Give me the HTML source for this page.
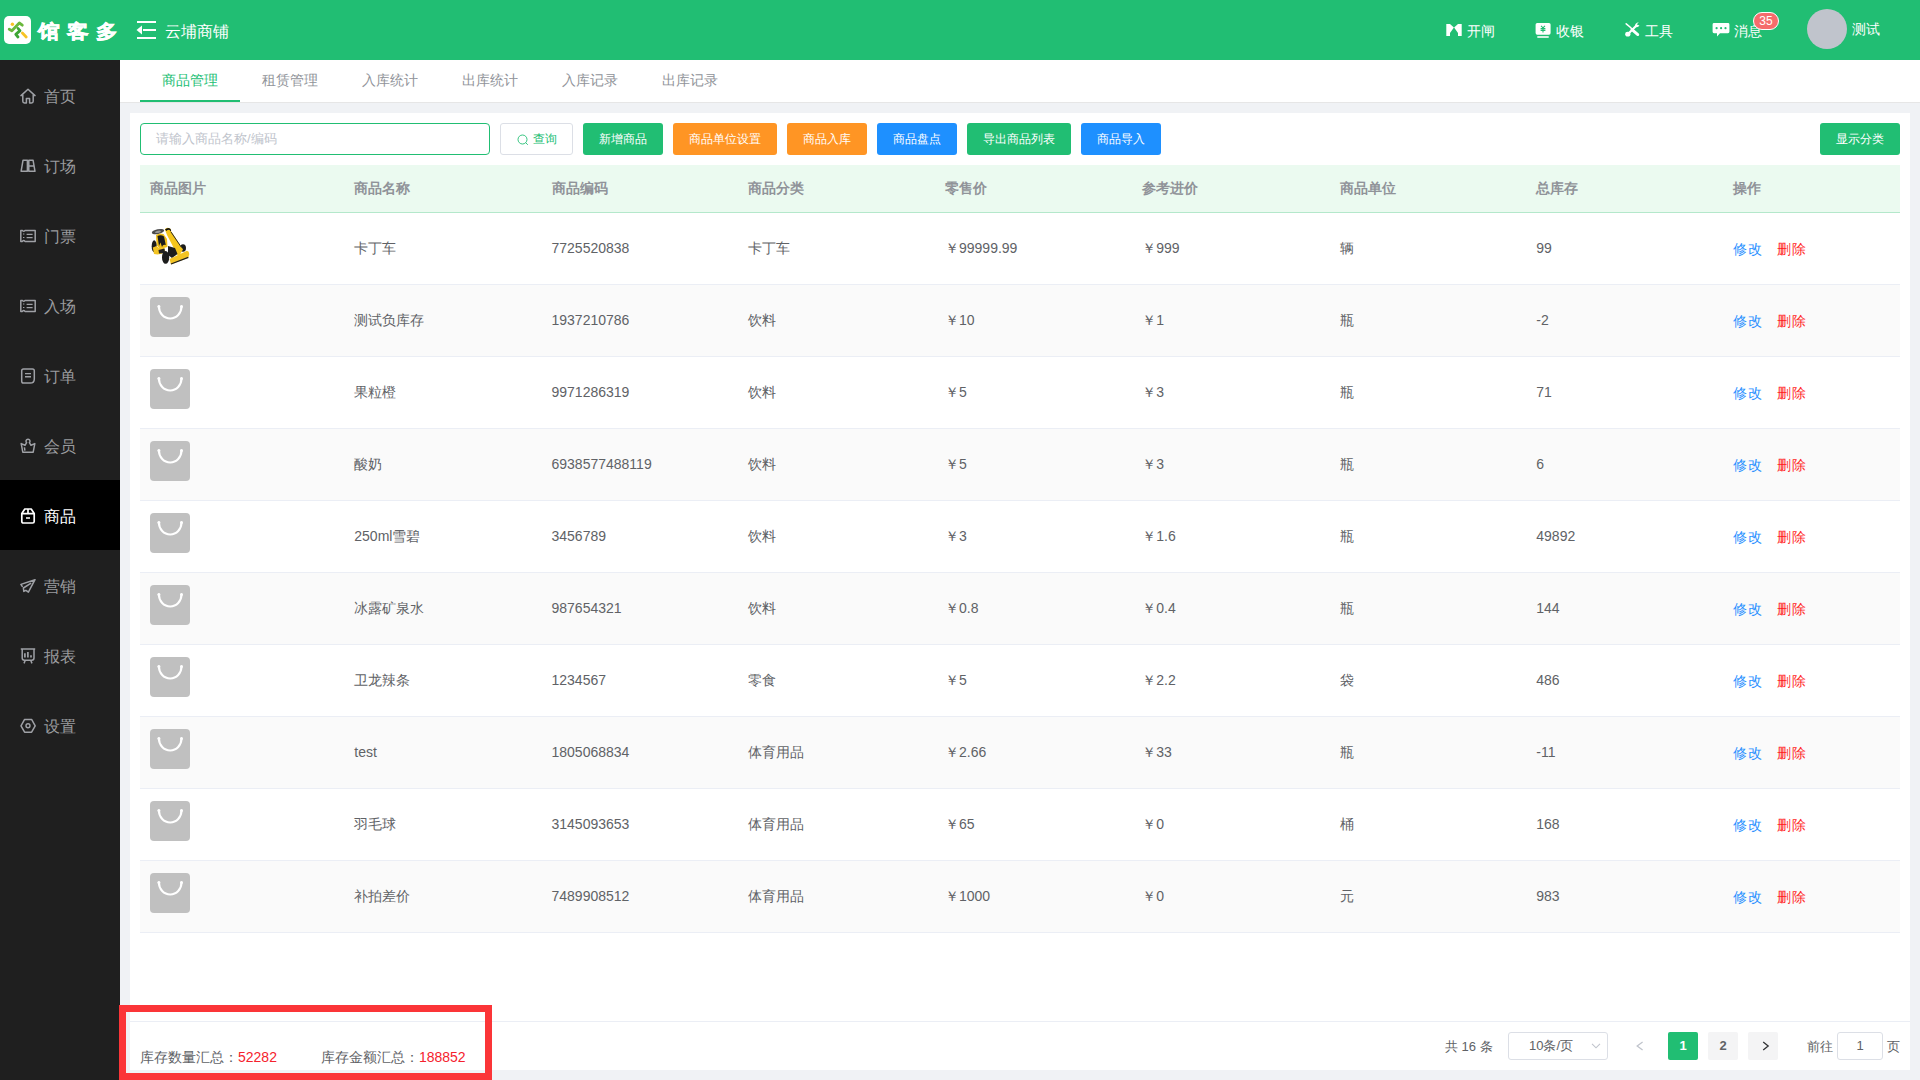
<!DOCTYPE html>
<html><head><meta charset="utf-8"><style>
*{margin:0;padding:0;box-sizing:border-box}
html,body{width:1920px;height:1080px;overflow:hidden;background:#f0f2f5;font-family:"Liberation Sans",sans-serif;font-size:14px;color:#606266}
.abs{position:absolute}
#hd{position:absolute;left:0;top:0;width:1920px;height:60px;background:#21be73}
#logo{position:absolute;left:4px;top:16px;width:27px;height:28px;background:#fff;border-radius:5px}
#brand{position:absolute;left:38px;top:17.5px;height:28px;line-height:28px;font-size:19px;font-weight:bold;color:#fff;letter-spacing:6.5px;-webkit-text-stroke:0.6px #fff;white-space:nowrap;transform:scaleX(1.14);transform-origin:0 50%}
#ham{position:absolute;left:136px;top:21px}
#shop{position:absolute;left:165px;top:21px;font-size:16px;line-height:22px;color:#fff;white-space:nowrap}
.hi{position:absolute;top:21px;height:20px;line-height:20px;font-size:14px;color:#fff;white-space:nowrap}
.hi svg{position:absolute;top:1px}
#badge{position:absolute;left:1753px;top:12px;width:26px;height:18px;border-radius:9px;background:#f56c6c;border:1px solid #fff;color:#fff;font-size:12px;line-height:17px;text-align:center}
#avatar{position:absolute;left:1807px;top:9px;width:40px;height:40px;border-radius:50%;background:#c0c4cc}
#uname{position:absolute;left:1852px;top:19px;font-size:14px;line-height:20px;color:#fff}
#sb{position:absolute;left:0;top:60px;width:120px;height:1020px;background:#1f1f1f}
.mi{position:absolute;left:0;width:120px;height:70px}
.mi.act{background:#000}
.mic{position:absolute;left:20px;top:28px}
.mt{position:absolute;left:44px;top:25.5px;font-size:16px;line-height:22px;color:#9a9b9e;white-space:nowrap}
.act .mt{color:#fff}
#tabs{position:absolute;left:120px;top:60px;width:1800px;height:43px;background:#fff;border-bottom:1px solid #e6e6e6}
.tab{position:absolute;top:0;width:100px;height:42px;line-height:40px;text-align:center;font-size:14px;color:#909399}
.tab.on{color:#21be73}
.tab.on:after{content:"";position:absolute;left:0;right:0;bottom:0;height:2px;background:#21be73}
#card{position:absolute;left:130px;top:113px;width:1780px;height:957px;background:#fff}
#search{position:absolute;left:10px;top:10px;width:350px;height:32px;border:1px solid #21be73;border-radius:4px;font-size:13px;line-height:30px;padding-left:15px;color:#c0c4cc;white-space:nowrap}
.btn{position:absolute;top:10px;height:32px;border-radius:3px;color:#fff;font-size:12px;line-height:32px;text-align:center;white-space:nowrap}
.g{background:#21be73}.o{background:#ff9524}.b{background:#1e90ff}
#qbtn{position:absolute;left:370px;top:10px;width:73px;height:32px;border:1px solid #dcdfe6;border-radius:3px;color:#21be73;font-size:12px;line-height:30px;white-space:nowrap}
#tbl{position:absolute;left:10px;top:52px;width:1760px;height:768px}
#thead{position:absolute;left:0;top:0;width:1760px;height:48px;background:#ebfaf0;border-bottom:1px solid #b4e8cb}
.th{position:absolute;top:13px;font-size:14px;line-height:20px;font-weight:bold;color:#909399;white-space:nowrap}
.tr{position:absolute;left:0;width:1760px;height:72px;border-bottom:1px solid #ebeef5}
.td{position:absolute;top:25px;font-size:14px;line-height:20px;color:#606266;white-space:nowrap}
.img{position:absolute;top:12px;width:40px;height:40px}
.bl{color:#2990ff;letter-spacing:1px}.rd{color:#ff1f1f;margin-left:14px;letter-spacing:1px}
.op{top:26px}
#foot{position:absolute;left:0;top:908px;width:1780px;height:1px;background:#ebeef5}
#sum{position:absolute;left:10px;top:934px;font-size:14px;line-height:20px;color:#606266;white-space:nowrap}
#sum .v{color:#f5222d}
#redbox{position:absolute;left:119px;top:1005px;width:373px;height:75px;border:7px solid #fb3538}
.pg{position:absolute;font-size:13px;color:#606266;white-space:nowrap}

</style></head><body>
<div id="hd">
  <div id="logo"><svg width="27" height="28" viewBox="0 0 27 28">
    <circle cx="8.4" cy="8.2" r="1.7" fill="#f7c325"/>
    <path d="M5.2 13.2 L7.9 14.8 L15.3 7 L18.3 9.2" fill="none" stroke="#6ab83d" stroke-width="2.8" stroke-linecap="round" stroke-linejoin="round"/>
    <path d="M14 12.4 L16 14.6 L11.8 18.4 L14 21" fill="none" stroke="#3ea535" stroke-width="2.8" stroke-linecap="round" stroke-linejoin="round"/>
    <path d="M18.4 17 L22.2 20.9" fill="none" stroke="#f7c325" stroke-width="2.8" stroke-linecap="round"/>
  </svg></div>
  <div id="brand">馆客多</div>
  <svg id="ham" width="21" height="18" viewBox="0 0 21 18"><path d="M1 1 H20 M7 9 H20 M1 17 H20" stroke="#fff" stroke-width="2"/><path d="M0.5 9 L6 4.5 V13.5 Z" fill="#fff"/></svg>
  <div id="shop">云埔商铺</div>

  <div class="hi" style="left:1446px"><svg style="top:3px" width="16" height="12" viewBox="0 0 16 12"><path d="M0.3 0 H4 L7.9 3.6 L4 9.1 V12 H0.3 Z M15.7 0 H12 L8.1 3.6 L12 9.1 V12 H15.7 Z" fill="#fff"/></svg><span style="margin-left:21px">开闸</span></div>
  <div class="hi" style="left:1535px"><svg width="16" height="16" viewBox="0 0 16 16"><rect x="0.6" y="1.1" width="15" height="11.6" rx="1.6" fill="#fff"/><rect x="2.3" y="14.2" width="11.4" height="1.6" fill="#fff"/><path d="M6 3.8 L8 5.8 L10 3.8 M5.6 6.6 H10.4 M5.6 8.4 H10.4 M8 5.8 V10.6" stroke="#21be73" stroke-width="1.1" fill="none"/></svg><span style="margin-left:21px">收银</span></div>
  <div class="hi" style="left:1625px"><svg style="top:1px" width="15" height="15" viewBox="0 0 15 15"><path d="M1.2 1.8 L5 5 L12.8 12.6" stroke="#fff" stroke-width="1.6" stroke-linecap="round" fill="none"/><path d="M7 7.6 L12.8 12.6" stroke="#fff" stroke-width="2.8" stroke-linecap="round"/><path d="M11.5 3.5 L3 12" stroke="#fff" stroke-width="2.2" stroke-linecap="round"/><ellipse cx="2.8" cy="12.2" rx="2.6" ry="2.4" fill="#fff"/><path d="M10 4.8 Q9.6 1.2 13.8 0.3 L11.6 2.6 L14.5 3.6 Q12.8 6 10 4.8 Z" fill="#fff"/></svg><span style="margin-left:20px">工具</span></div>
  <div class="hi" style="left:1712px"><svg width="18" height="16" viewBox="0 0 18 16"><path d="M2 1 H16 Q17.4 1 17.4 2.4 V9.8 Q17.4 11.2 16 11.2 H8 L5 14.4 V11.2 H2 Q0.6 11.2 0.6 9.8 V2.4 Q0.6 1 2 1 Z" fill="#fff"/><circle cx="4.6" cy="6.2" r="1.1" fill="#21be73"/><circle cx="9.1" cy="6.2" r="1.1" fill="#21be73"/><circle cx="13.5" cy="6.2" r="1.1" fill="#21be73"/></svg><span style="margin-left:22px">消息</span></div>
  <div id="badge">35</div>
  <div id="avatar"></div>
  <div id="uname">测试</div>
</div>

<div id="sb">
</div>
<div class="mi" style="top:60px"><svg class="mic" width="16" height="16" viewBox="0 0 16 16"><path d="M1 7.6 L8 1.2 L15 7.6" fill="none" stroke="#9fa1a6" stroke-width="1.5" stroke-linejoin="round" stroke-linecap="round"/><path d="M2.8 6.4 V13.3 Q2.8 15 4.5 15 H6.4 V10.6 H9.6 V15 H11.5 Q13.2 15 13.2 13.3 V6.4" fill="none" stroke="#9fa1a6" stroke-width="1.5" stroke-linejoin="round"/></svg><span class="mt">首页</span></div>
<div class="mi" style="top:130px"><svg class="mic" width="16" height="16" viewBox="0 0 16 16"><path d="M3 2.3 H7.4 V13.3 H1.1 Z M8.8 2.3 H13.1 L15 13.3 H8.8 Z M8.8 8 H14" fill="none" stroke="#9fa1a6" stroke-width="1.5" stroke-linejoin="round"/></svg><span class="mt">订场</span></div>
<div class="mi" style="top:200px"><svg class="mic" width="16" height="16" viewBox="0 0 16 16"><path d="M0.8 2.4 H2.4 Q3.7 4.2 5 2.4 H15.2 V13.4 H5 Q3.7 11.6 2.4 13.4 H0.8 Z" fill="none" stroke="#9fa1a6" stroke-width="1.5" stroke-linejoin="round"/><path d="M3.7 5.6 V6.6 M3.7 9 V10 M6.6 6.4 H12.6 M6.6 9.6 H12.6" fill="none" stroke="#9fa1a6" stroke-width="1.4"/></svg><span class="mt">门票</span></div>
<div class="mi" style="top:270px"><svg class="mic" width="16" height="16" viewBox="0 0 16 16"><path d="M0.8 2.4 H2.4 Q3.7 4.2 5 2.4 H15.2 V13.4 H5 Q3.7 11.6 2.4 13.4 H0.8 Z" fill="none" stroke="#9fa1a6" stroke-width="1.5" stroke-linejoin="round"/><path d="M3.7 5.6 V6.6 M3.7 9 V10 M6.6 6.4 H12.6 M6.6 9.6 H12.6" fill="none" stroke="#9fa1a6" stroke-width="1.4"/></svg><span class="mt">入场</span></div>
<div class="mi" style="top:340px"><svg class="mic" width="16" height="16" viewBox="0 0 16 16"><path d="M3.5 0.9 H12.5 Q14.3 0.9 14.3 2.7 V11 Q14.3 15.1 10.2 15.1 H3.5 Q1.7 15.1 1.7 13.3 V2.7 Q1.7 0.9 3.5 0.9 Z" fill="none" stroke="#9fa1a6" stroke-width="1.5" stroke-linejoin="round"/><path d="M5 5.6 H11 M5 8.7 H11" fill="none" stroke="#9fa1a6" stroke-width="1.4"/></svg><span class="mt">订单</span></div>
<div class="mi" style="top:410px"><svg class="mic" width="16" height="16" viewBox="0 0 16 16"><path d="M1.2 5.6 L5 7.3 L6.6 4.6 A2 2 0 1 1 9.4 4.6 L11 7.3 L14.8 5.6 L13.2 14.2 H2.8 Z M4.4 9.4 L4.9 12.6" fill="none" stroke="#9fa1a6" stroke-width="1.5" stroke-linejoin="round"/></svg><span class="mt">会员</span></div>
<div class="mi act" style="top:480px"><svg class="mic" width="16" height="16" viewBox="0 0 16 16"><path d="M4.8 1 H11.2 L14.2 5.4 V13.4 Q14.2 15 12.6 15 H3.4 Q1.8 15 1.8 13.4 V5.4 Z M1.8 5.6 H14.2 M8 1 V5.6 M6 10 H10" fill="none" stroke="#ffffff" stroke-width="1.7" stroke-linejoin="round"/></svg><span class="mt">商品</span></div>
<div class="mi" style="top:550px"><svg class="mic" width="16" height="16" viewBox="0 0 16 16"><path d="M15 1.7 L0.9 6.4 L2.2 8.4 M15 1.7 L8.4 14.2 L5.9 12.3 L3.8 13.4 L3.4 10 L10.7 5.3" fill="none" stroke="#9fa1a6" stroke-width="1.5" stroke-linejoin="round" stroke-linecap="round"/></svg><span class="mt">营销</span></div>
<div class="mi" style="top:620px"><svg class="mic" width="16" height="16" viewBox="0 0 16 16"><path d="M0.8 1 H15.2 M2.2 1 V10 Q2.2 12.2 4.4 12.2 H11.8 Q14 12.2 14 10 V1 M5.2 12.5 L4 15.4 M10.8 12.5 L12 15.4" fill="none" stroke="#9fa1a6" stroke-width="1.5" stroke-linejoin="round"/><path d="M4.9 5.2 V9.6 M7.9 3.9 V9.6 M11 7.2 V9.6" fill="none" stroke="#9fa1a6" stroke-width="1.7"/></svg><span class="mt">报表</span></div>
<div class="mi" style="top:690px"><svg class="mic" width="16" height="16" viewBox="0 0 16 16"><path d="M4.6 1.4 H11.6 L15.2 7.8 L11.6 14.2 H4.6 L1 7.8 Z" fill="none" stroke="#9fa1a6" stroke-width="1.5" stroke-linejoin="round"/><circle cx="8" cy="7.8" r="2" fill="none" stroke="#9fa1a6" stroke-width="1.4"/></svg><span class="mt">设置</span></div>

<div id="tabs">
  <div class="tab on" style="left:20px">商品管理</div>
  <div class="tab" style="left:120px">租赁管理</div>
  <div class="tab" style="left:220px">入库统计</div>
  <div class="tab" style="left:320px">出库统计</div>
  <div class="tab" style="left:420px">入库记录</div>
  <div class="tab" style="left:520px">出库记录</div>
</div>

<div id="card">
  <div id="search">请输入商品名称/编码</div>
  <div id="qbtn"><svg style="position:absolute;left:16px;top:9.5px" width="12" height="12" viewBox="0 0 12 12"><circle cx="5.5" cy="5.5" r="4.5" fill="none" stroke="#21be73" stroke-width="0.9"/><path d="M8.7 8.7 L10.8 10.8" stroke="#21be73" stroke-width="0.9"/></svg><span style="position:absolute;left:32px;top:0">查询</span></div>
  <div class="btn g" style="left:453px;width:80px">新增商品</div>
  <div class="btn o" style="left:543px;width:104px">商品单位设置</div>
  <div class="btn o" style="left:657px;width:80px">商品入库</div>
  <div class="btn b" style="left:747px;width:80px">商品盘点</div>
  <div class="btn g" style="left:837px;width:104px">导出商品列表</div>
  <div class="btn b" style="left:951px;width:80px">商品导入</div>
  <div class="btn g" style="left:1690px;width:80px">显示分类</div>

  <div id="tbl">
    <div id="thead"><div class="th" style="left:10px">商品图片</div><div class="th" style="left:214.3px">商品名称</div><div class="th" style="left:411.5px">商品编码</div><div class="th" style="left:608.3px">商品分类</div><div class="th" style="left:805px">零售价</div><div class="th" style="left:1002.3px">参考进价</div><div class="th" style="left:1199.6px">商品单位</div><div class="th" style="left:1396.3px">总库存</div><div class="th" style="left:1593px">操作</div></div>
  </div>
  <div id="foot"></div>
  <div id="sum">库存数量汇总：<span class="v">52282</span><span style="display:inline-block;width:44px"></span>库存金额汇总：<span class="v">188852</span></div>

  <div class="pg" style="left:1315px;top:925px;line-height:18px">共 16 条</div>
  <div class="pg" style="left:1378px;top:919px;width:100px;height:28px;border:1px solid #dcdfe6;border-radius:3px;line-height:26px;padding-left:20px">10条/页<svg style="position:absolute;left:82px;top:10px" width="10" height="6" viewBox="0 0 10 6"><path d="M1 0.8 L5 4.8 L9 0.8" fill="none" stroke="#c0c4cc" stroke-width="1.1"/></svg></div>
  <svg class="abs" style="left:1506px;top:928px" width="8" height="10" viewBox="0 0 8 10"><path d="M6.6 1 L1.2 5 L6.6 9" fill="none" stroke="#c0c4cc" stroke-width="1.3"/></svg>
  <div class="pg" style="left:1538px;top:919px;width:30px;height:28px;background:#21be73;border-radius:2px;color:#fff;font-weight:bold;text-align:center;line-height:28px">1</div>
  <div class="pg" style="left:1578px;top:919px;width:30px;height:28px;background:#f4f4f5;border-radius:2px;color:#606266;font-weight:bold;text-align:center;line-height:28px">2</div>
  <div class="pg" style="left:1618px;top:919px;width:30px;height:28px;background:#f4f4f5;border-radius:2px"><svg class="abs" style="left:14px;top:9px" width="8" height="10" viewBox="0 0 8 10"><path d="M1.2 1 L6.2 5 L1.2 9" fill="none" stroke="#303133" stroke-width="1.3"/></svg></div>
  <div class="pg" style="left:1677px;top:925px;line-height:18px">前往</div>
  <div class="pg" style="left:1707px;top:919px;width:46px;height:28px;border:1px solid #dcdfe6;border-radius:3px;text-align:center;line-height:26px">1</div>
  <div class="pg" style="left:1757px;top:925px;line-height:18px">页</div>
</div>
<div id="rowsWrap" style="position:absolute;left:140px;top:0;width:1760px;height:0"><div class="tr" style="top:213px;background:#ffffff"><div class="img" style="left:10px"><svg width="40" height="40" viewBox="0 0 40 40">
<ellipse cx="8" cy="6.6" rx="6.3" ry="2.4" transform="rotate(-12 8 6.6)" fill="#4d4d4d"/>
<ellipse cx="8" cy="6.8" rx="3" ry="1.1" transform="rotate(-12 8 6.8)" fill="#9a9a9a"/>
<path d="M6 10 Q9 7.5 13.5 9 L17 14 L17.5 22 L10 24 L6.5 20 Z" fill="#f0bf1a"/>
<path d="M7.5 11 Q11 9.5 14 11.5 L15.8 20 Q13 19 12 22 L10.5 17.5 L9 21 Z" fill="#1c1c1c"/>
<ellipse cx="4.2" cy="21.2" rx="2.5" ry="6" fill="#1c1c1c"/>
<path d="M2.8 22.5 L6.5 21 Q10 24.5 14 22.5 L15.5 27 Q10 30.5 4 29 Z" fill="#f3c424"/>
<path d="M8.5 25 L14.5 23.5 L15 28 L9 28.5 Z" fill="#222"/>
<ellipse cx="33" cy="23" rx="3" ry="3.8" fill="#1c1c1c"/>
<path d="M14.8 4.2 Q17 2.2 19.5 3.2 Q21.5 4 21 6 L33 24.5 L28.5 32 L17 10 Z" fill="#f5c51b"/>
<path d="M15 4.5 Q17.5 2 20 3.4 Q21.6 4.6 21 6.8 L19.6 5 Q18 4 16.5 6 Z" fill="#111"/>
<path d="M21 7 L31.5 22.5" stroke="#2a2a2a" stroke-width="1"/>
<path d="M18 21 L25 23 L27.5 29 L22 33 L18 30 Z" fill="#1c1c1c"/>
<ellipse cx="15.6" cy="32.4" rx="3.6" ry="6.4" fill="#1c1c1c"/>
<path d="M19.5 34 L37 25.8 Q39.5 26.5 39.2 29.5 L38.3 32.8 L21 39.4 Z" fill="#f3c424"/>
<path d="M21 39 L38.3 32.4" fill="none" stroke="#1e1e1e" stroke-width="1.3"/>
</svg></div><div class="td" style="left:214.3px">卡丁车</div><div class="td" style="left:411.5px">7725520838</div><div class="td" style="left:608.3px">卡丁车</div><div class="td" style="left:805px">￥99999.99</div><div class="td" style="left:1002.3px">￥999</div><div class="td" style="left:1199.6px">辆</div><div class="td" style="left:1396.3px">99</div><div class="td op" style="left:1593px"><span class="bl">修改</span><span class="rd">删除</span></div></div>
<div class="tr" style="top:285px;background:#fafafa"><div class="img" style="left:10px"><svg width="40" height="40" viewBox="0 0 40 40"><rect width="40" height="40" rx="4" fill="#c0c0c0"/><path d="M8.9 9.6 A11.3 11.9 0 0 0 31.5 9.6" fill="none" stroke="#fff" stroke-width="2.1" stroke-linecap="round"/><circle cx="8.9" cy="9.4" r="1.5" fill="#fff"/><circle cx="31.5" cy="9.4" r="1.5" fill="#fff"/></svg></div><div class="td" style="left:214.3px">测试负库存</div><div class="td" style="left:411.5px">1937210786</div><div class="td" style="left:608.3px">饮料</div><div class="td" style="left:805px">￥10</div><div class="td" style="left:1002.3px">￥1</div><div class="td" style="left:1199.6px">瓶</div><div class="td" style="left:1396.3px">-2</div><div class="td op" style="left:1593px"><span class="bl">修改</span><span class="rd">删除</span></div></div>
<div class="tr" style="top:357px;background:#ffffff"><div class="img" style="left:10px"><svg width="40" height="40" viewBox="0 0 40 40"><rect width="40" height="40" rx="4" fill="#c0c0c0"/><path d="M8.9 9.6 A11.3 11.9 0 0 0 31.5 9.6" fill="none" stroke="#fff" stroke-width="2.1" stroke-linecap="round"/><circle cx="8.9" cy="9.4" r="1.5" fill="#fff"/><circle cx="31.5" cy="9.4" r="1.5" fill="#fff"/></svg></div><div class="td" style="left:214.3px">果粒橙</div><div class="td" style="left:411.5px">9971286319</div><div class="td" style="left:608.3px">饮料</div><div class="td" style="left:805px">￥5</div><div class="td" style="left:1002.3px">￥3</div><div class="td" style="left:1199.6px">瓶</div><div class="td" style="left:1396.3px">71</div><div class="td op" style="left:1593px"><span class="bl">修改</span><span class="rd">删除</span></div></div>
<div class="tr" style="top:429px;background:#fafafa"><div class="img" style="left:10px"><svg width="40" height="40" viewBox="0 0 40 40"><rect width="40" height="40" rx="4" fill="#c0c0c0"/><path d="M8.9 9.6 A11.3 11.9 0 0 0 31.5 9.6" fill="none" stroke="#fff" stroke-width="2.1" stroke-linecap="round"/><circle cx="8.9" cy="9.4" r="1.5" fill="#fff"/><circle cx="31.5" cy="9.4" r="1.5" fill="#fff"/></svg></div><div class="td" style="left:214.3px">酸奶</div><div class="td" style="left:411.5px">6938577488119</div><div class="td" style="left:608.3px">饮料</div><div class="td" style="left:805px">￥5</div><div class="td" style="left:1002.3px">￥3</div><div class="td" style="left:1199.6px">瓶</div><div class="td" style="left:1396.3px">6</div><div class="td op" style="left:1593px"><span class="bl">修改</span><span class="rd">删除</span></div></div>
<div class="tr" style="top:501px;background:#ffffff"><div class="img" style="left:10px"><svg width="40" height="40" viewBox="0 0 40 40"><rect width="40" height="40" rx="4" fill="#c0c0c0"/><path d="M8.9 9.6 A11.3 11.9 0 0 0 31.5 9.6" fill="none" stroke="#fff" stroke-width="2.1" stroke-linecap="round"/><circle cx="8.9" cy="9.4" r="1.5" fill="#fff"/><circle cx="31.5" cy="9.4" r="1.5" fill="#fff"/></svg></div><div class="td" style="left:214.3px">250ml雪碧</div><div class="td" style="left:411.5px">3456789</div><div class="td" style="left:608.3px">饮料</div><div class="td" style="left:805px">￥3</div><div class="td" style="left:1002.3px">￥1.6</div><div class="td" style="left:1199.6px">瓶</div><div class="td" style="left:1396.3px">49892</div><div class="td op" style="left:1593px"><span class="bl">修改</span><span class="rd">删除</span></div></div>
<div class="tr" style="top:573px;background:#fafafa"><div class="img" style="left:10px"><svg width="40" height="40" viewBox="0 0 40 40"><rect width="40" height="40" rx="4" fill="#c0c0c0"/><path d="M8.9 9.6 A11.3 11.9 0 0 0 31.5 9.6" fill="none" stroke="#fff" stroke-width="2.1" stroke-linecap="round"/><circle cx="8.9" cy="9.4" r="1.5" fill="#fff"/><circle cx="31.5" cy="9.4" r="1.5" fill="#fff"/></svg></div><div class="td" style="left:214.3px">冰露矿泉水</div><div class="td" style="left:411.5px">987654321</div><div class="td" style="left:608.3px">饮料</div><div class="td" style="left:805px">￥0.8</div><div class="td" style="left:1002.3px">￥0.4</div><div class="td" style="left:1199.6px">瓶</div><div class="td" style="left:1396.3px">144</div><div class="td op" style="left:1593px"><span class="bl">修改</span><span class="rd">删除</span></div></div>
<div class="tr" style="top:645px;background:#ffffff"><div class="img" style="left:10px"><svg width="40" height="40" viewBox="0 0 40 40"><rect width="40" height="40" rx="4" fill="#c0c0c0"/><path d="M8.9 9.6 A11.3 11.9 0 0 0 31.5 9.6" fill="none" stroke="#fff" stroke-width="2.1" stroke-linecap="round"/><circle cx="8.9" cy="9.4" r="1.5" fill="#fff"/><circle cx="31.5" cy="9.4" r="1.5" fill="#fff"/></svg></div><div class="td" style="left:214.3px">卫龙辣条</div><div class="td" style="left:411.5px">1234567</div><div class="td" style="left:608.3px">零食</div><div class="td" style="left:805px">￥5</div><div class="td" style="left:1002.3px">￥2.2</div><div class="td" style="left:1199.6px">袋</div><div class="td" style="left:1396.3px">486</div><div class="td op" style="left:1593px"><span class="bl">修改</span><span class="rd">删除</span></div></div>
<div class="tr" style="top:717px;background:#fafafa"><div class="img" style="left:10px"><svg width="40" height="40" viewBox="0 0 40 40"><rect width="40" height="40" rx="4" fill="#c0c0c0"/><path d="M8.9 9.6 A11.3 11.9 0 0 0 31.5 9.6" fill="none" stroke="#fff" stroke-width="2.1" stroke-linecap="round"/><circle cx="8.9" cy="9.4" r="1.5" fill="#fff"/><circle cx="31.5" cy="9.4" r="1.5" fill="#fff"/></svg></div><div class="td" style="left:214.3px">test</div><div class="td" style="left:411.5px">1805068834</div><div class="td" style="left:608.3px">体育用品</div><div class="td" style="left:805px">￥2.66</div><div class="td" style="left:1002.3px">￥33</div><div class="td" style="left:1199.6px">瓶</div><div class="td" style="left:1396.3px">-11</div><div class="td op" style="left:1593px"><span class="bl">修改</span><span class="rd">删除</span></div></div>
<div class="tr" style="top:789px;background:#ffffff"><div class="img" style="left:10px"><svg width="40" height="40" viewBox="0 0 40 40"><rect width="40" height="40" rx="4" fill="#c0c0c0"/><path d="M8.9 9.6 A11.3 11.9 0 0 0 31.5 9.6" fill="none" stroke="#fff" stroke-width="2.1" stroke-linecap="round"/><circle cx="8.9" cy="9.4" r="1.5" fill="#fff"/><circle cx="31.5" cy="9.4" r="1.5" fill="#fff"/></svg></div><div class="td" style="left:214.3px">羽毛球</div><div class="td" style="left:411.5px">3145093653</div><div class="td" style="left:608.3px">体育用品</div><div class="td" style="left:805px">￥65</div><div class="td" style="left:1002.3px">￥0</div><div class="td" style="left:1199.6px">桶</div><div class="td" style="left:1396.3px">168</div><div class="td op" style="left:1593px"><span class="bl">修改</span><span class="rd">删除</span></div></div>
<div class="tr" style="top:861px;background:#fafafa"><div class="img" style="left:10px"><svg width="40" height="40" viewBox="0 0 40 40"><rect width="40" height="40" rx="4" fill="#c0c0c0"/><path d="M8.9 9.6 A11.3 11.9 0 0 0 31.5 9.6" fill="none" stroke="#fff" stroke-width="2.1" stroke-linecap="round"/><circle cx="8.9" cy="9.4" r="1.5" fill="#fff"/><circle cx="31.5" cy="9.4" r="1.5" fill="#fff"/></svg></div><div class="td" style="left:214.3px">补拍差价</div><div class="td" style="left:411.5px">7489908512</div><div class="td" style="left:608.3px">体育用品</div><div class="td" style="left:805px">￥1000</div><div class="td" style="left:1002.3px">￥0</div><div class="td" style="left:1199.6px">元</div><div class="td" style="left:1396.3px">983</div><div class="td op" style="left:1593px"><span class="bl">修改</span><span class="rd">删除</span></div></div></div>
<div id="redbox"></div>

</body></html>
